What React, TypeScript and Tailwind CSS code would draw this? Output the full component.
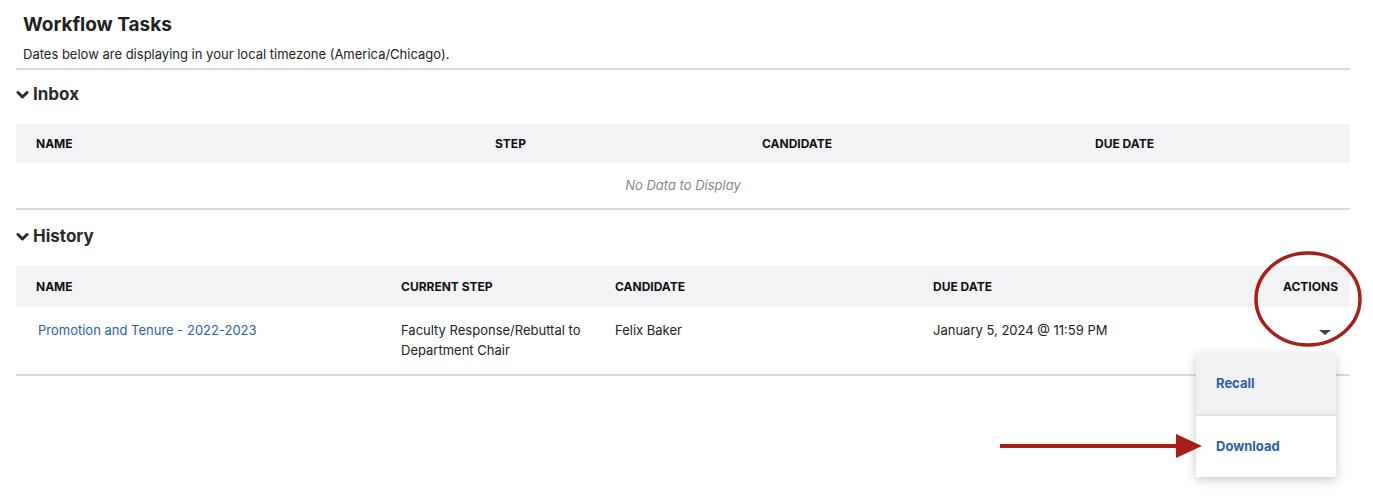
import React from 'react';

const inboxCols = ['Name', 'Step', 'Candidate', 'Due Date'];

const Chevron: React.FC = () => (
    <svg width="13" height="10" viewBox="0 0 13 10" className="shrink-0">
        <polyline points="2,2.5 6.5,7 11,2.5" fill="none" stroke="#2b2b2b" strokeWidth="3" strokeLinecap="round" strokeLinejoin="round" />
    </svg>
);

const SectionTitle: React.FC<{ label: string }> = ({ label }) => (
    <div className="flex items-center gap-[4px] h-[30px] text-[17px] font-bold text-[#2b2b2b]">
        <Chevron />
        <span>{label}</span>
    </div>
);

const App: React.FC = () => {
    return (
        <div className="relative w-[1373px] h-[501px] bg-white overflow-hidden font-['Inter',sans-serif] text-[#222]">
            <div className="pl-4 pr-[23px] pt-[12px]">
                {/* Header */}
                <div className="pl-[7px]">
                    <h1 className="text-[19px] leading-[26px] font-bold text-[#222]">Workflow Tasks</h1>
                    <p className="mt-[7px] text-[13px] leading-[18px] text-[#222]">
                        Dates below are displaying in your local timezone (America/Chicago).
                    </p>
                </div>
                <div className="mt-[5px] h-[2px] bg-[#d9d9d9]" />

                {/* Inbox */}
                <div className="mt-[10px]">
                    <SectionTitle label="Inbox" />
                </div>
                <div className="mt-[14px]">
                    <div className="grid grid-cols-[459px_267px_333px_1fr] h-[39px] items-center bg-[#f3f3f5] text-[12px] font-bold uppercase text-[#111]">
                        {inboxCols.map((c) => (
                            <div key={c} className="pl-5">{c}</div>
                        ))}
                    </div>
                    <div className="h-[45px] flex items-center justify-center text-[13px] italic text-[#888]">
                        No Data to Display
                    </div>
                    <div className="h-[2px] bg-[#d9d9d9]" />
                </div>

                {/* History */}
                <div className="mt-[12px]">
                    <SectionTitle label="History" />
                </div>
                <div className="mt-[14px]">
                    <div className="grid grid-cols-[365px_214px_318px_1fr_120px] h-[41px] items-center bg-[#f3f3f5] text-[12px] font-bold uppercase text-[#111]">
                        <div className="pl-5">Name</div>
                        <div className="pl-5">Current Step</div>
                        <div className="pl-5">Candidate</div>
                        <div className="pl-5">Due Date</div>
                        <div className="pr-3 text-right">Actions</div>
                    </div>
                    <div className="grid grid-cols-[365px_214px_318px_1fr_120px] h-[67px] pt-[13px] text-[13px] leading-[20px] text-[#222]">
                        <div className="pl-[22px]">
                            <a href="#" className="text-[#2d5fa6]">Promotion and Tenure - 2022-2023</a>
                        </div>
                        <div className="pl-5">Faculty Response/Rebuttal to<br />Department Chair</div>
                        <div className="pl-5">Felix Baker</div>
                        <div className="pl-5">January 5, 2024 @ 11:59 PM</div>
                        <div className="flex justify-end pr-[19px] pt-[10px]">
                            <div className="w-0 h-0 border-l-[6px] border-r-[6px] border-t-[5px] border-l-transparent border-r-transparent border-t-[#444]" />
                        </div>
                    </div>
                    <div className="h-[2px] bg-[#d9d9d9]" />
                </div>
            </div>

            {/* Actions dropdown */}
            <div className="absolute left-[1196px] top-[353px] w-[140px] bg-white shadow-[0_3px_10px_rgba(0,0,0,0.22)] text-[13px] font-bold text-[#2d5fa6]">
                <div className="h-[61px] flex items-center pl-5 bg-[#f1f1f3]">Recall</div>
                <div className="h-[2px] bg-[#e4e4e7]" />
                <div className="h-[61px] flex items-center pl-5">Download</div>
            </div>

            {/* Annotation: circle around actions */}
            <svg className="absolute left-[1250px] top-[248px]" width="120" height="104" viewBox="0 0 120 104">
                <ellipse cx="58" cy="51" rx="52" ry="46" fill="none" stroke="#a81f17" strokeWidth="3.5" />
            </svg>

            {/* Annotation: arrow */}
            <svg className="absolute left-[998px] top-[432px]" width="208" height="28" viewBox="0 0 208 28">
                <line x1="2" y1="14" x2="182" y2="14" stroke="#a81f17" strokeWidth="4" />
                <polygon points="178,2 204,14 178,26" fill="#a81f17" />
            </svg>
        </div>
    );
};

export default App;
